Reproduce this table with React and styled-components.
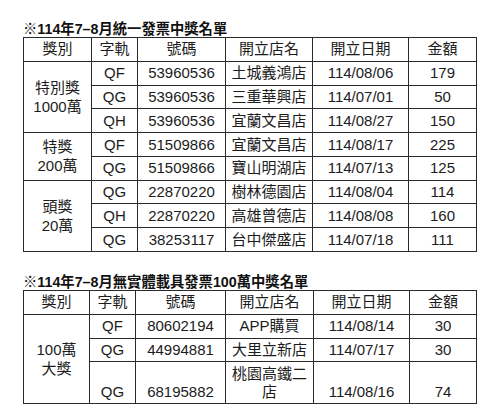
import React from "react";
import styled, { createGlobalStyle } from "styled-components";

const Global = createGlobalStyle`
  html, body { margin: 0; padding: 0; background: #ffffff; }
  body {
    font-family: "Liberation Sans", "Noto Sans CJK TC", sans-serif;
    color: #1c1c1c;
  }
`;

const Page = styled.div`
  width: 500px;
  height: 418px;
  box-sizing: border-box;
  padding: 21px 24px 0 23px;
  display: flex;
  flex-direction: column;
`;

const Title = styled.h2`
  margin: ${(p) => (p.$first ? "0" : "22px 0 0")};
  font-size: 14.3px;
  line-height: 16px;
  height: 16px;
  font-weight: 700;
  color: #111;
  white-space: nowrap;
`;

const Table = styled.table`
  width: 453px;
  border-collapse: collapse;
  table-layout: fixed;
  border: 1.6px solid #1a1a1a;
`;

const Col = styled.col`
  width: ${(p) => p.$w}px;
`;

const Th = styled.th`
  font-weight: 400;
  font-size: 15px;
  line-height: 18px;
  height: 18px;
  padding: 2.4px 3px;
  border: 1px solid #2a2a2a;
  text-align: center;
  color: #1c1c1c;
`;

const Td = styled.td`
  font-size: 15px;
  line-height: 18px;
  padding: 2.4px 5px;
  border: 1px solid #2a2a2a;
  text-align: center;
  vertical-align: ${(p) => p.$valign || "middle"};
  color: #1c1c1c;
`;

const Rank = styled(Td)`
  line-height: 19px;
`;

const headers = ["獎別", "字軌", "號碼", "開立店名", "開立日期", "金額"];

const table1 = [
  {
    rank: ["特別獎", "1000萬"],
    rows: [
      ["QF", "53960536", "土城義鴻店", "114/08/06", "179"],
      ["QG", "53960536", "三重華興店", "114/07/01", "50"],
      ["QH", "53960536", "宜蘭文昌店", "114/08/27", "150"],
    ],
  },
  {
    rank: ["特獎", "200萬"],
    rows: [
      ["QF", "51509866", "宜蘭文昌店", "114/08/17", "225"],
      ["QG", "51509866", "寶山明湖店", "114/07/13", "125"],
    ],
  },
  {
    rank: ["頭獎", "20萬"],
    rows: [
      ["QG", "22870220", "樹林德園店", "114/08/04", "114"],
      ["QH", "22870220", "高雄曾德店", "114/08/08", "160"],
      ["QG", "38253117", "台中傑盛店", "114/07/18", "111"],
    ],
  },
];

const table2 = [
  {
    rank: ["100萬", "大獎"],
    rows: [
      ["QF", "80602194", "APP購買", "114/08/14", "30"],
      ["QG", "44994881", "大里立新店", "114/07/17", "30"],
      ["QG", "68195882", "桃園高鐵二店", "114/08/16", "74", "bottom"],
    ],
  },
];

function PrizeTable({ widths, groups }) {
  return (
    <Table>
      <colgroup>
        {widths.map((w, i) => (
          <Col key={i} $w={w} />
        ))}
      </colgroup>
      <thead>
        <tr>
          {headers.map((h) => (
            <Th key={h}>{h}</Th>
          ))}
        </tr>
      </thead>
      <tbody>
        {groups.map((g, gi) =>
          g.rows.map((r, ri) => (
            <tr key={`${gi}-${ri}`}>
              {ri === 0 && (
                <Rank rowSpan={g.rows.length}>
                  {g.rank[0]}
                  <br />
                  {g.rank[1]}
                </Rank>
              )}
              {r.slice(0, 5).map((c, ci) => (
                <Td key={ci} $valign={r[5]}>
                  {c}
                </Td>
              ))}
            </tr>
          ))
        )}
      </tbody>
    </Table>
  );
}

export default function App() {
  return (
    <>
      <Global />
      <Page>
        <Title $first>※114年7–8月統一發票中獎名單</Title>
        <PrizeTable widths={[68, 46, 88, 87, 96, 68]} groups={table1} />
        <Title>※114年7–8月無實體載具發票100萬中獎名單</Title>
        <PrizeTable widths={[66, 46, 90, 88, 96, 67]} groups={table2} />
      </Page>
    </>
  );
}
